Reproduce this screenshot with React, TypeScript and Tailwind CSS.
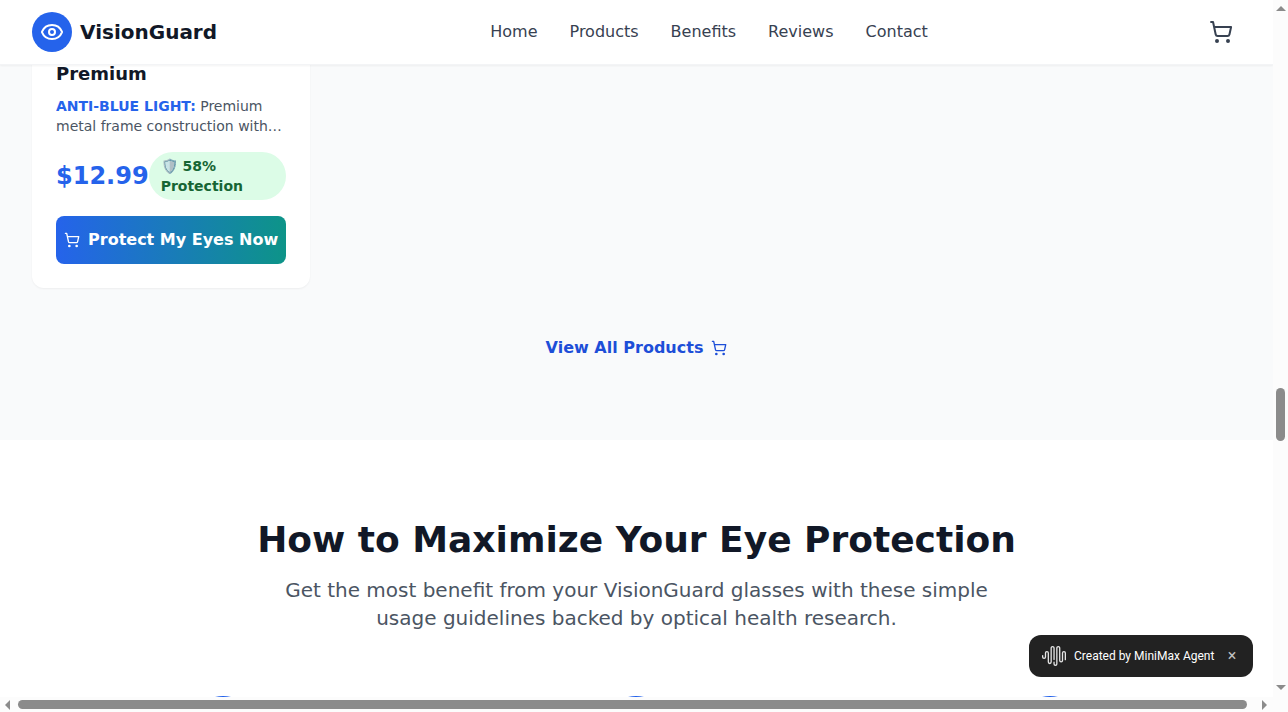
import { Eye, ShoppingCart } from "lucide-react";

const links = ["Home", "Products", "Benefits", "Reviews", "Contact"];
const steps = ["Step 1", "Step 2", "Step 3"];

function Header() {
  return (
    <header className="relative z-10 flex h-16 shrink-0 items-center justify-between bg-white px-8 shadow-[0_1px_0_#f3f4f6,0_2px_2px_rgba(0,0,0,0.05)]">
      <a href="#home" className="flex items-center gap-2">
        <span className="flex size-10 items-center justify-center rounded-full bg-[#2563eb] text-white">
          <Eye size={24} />
        </span>
        <span className="text-xl font-bold text-[#111827]">VisionGuard</span>
      </a>
      <nav className="flex gap-8 text-[#374151]">
        {links.map((link) => (
          <a key={link} href={`#${link.toLowerCase()}`}>
            {link}
          </a>
        ))}
      </nav>
      <button type="button" aria-label="Cart" className="p-2 text-[#374151]">
        <ShoppingCart size={24} />
      </button>
    </header>
  );
}

function ProductCard() {
  return (
    <article className="-mt-1 rounded-b-xl bg-white px-6 pb-6 shadow-[0_1px_2px_rgba(0,0,0,0.05)]">
      <h3 className="mb-2 text-lg font-semibold text-[#111827]">Premium</h3>
      <p className="mb-4 line-clamp-2 text-sm text-[#4b5563]">
        <strong className="font-bold text-[#2563eb]">ANTI-BLUE LIGHT:</strong> Premium metal frame
        construction with advanced lens coating
      </p>
      <div className="mb-4 flex items-center justify-between">
        <span className="text-2xl font-bold text-[#2563eb]">$12.99</span>
        <span className="rounded-full bg-[#dcfce7] px-3 py-1 text-sm font-semibold text-[#166534]">
          🛡️ 58% Protection
        </span>
      </div>
      <button
        type="button"
        className="flex h-12 w-full items-center justify-center gap-2 rounded-lg bg-[linear-gradient(to_right,#2563eb,#0d9488)] font-semibold whitespace-nowrap text-white"
      >
        <ShoppingCart size={16} className="shrink-0" />
        Protect My Eyes Now
      </button>
    </article>
  );
}

function Products() {
  return (
    <section className="bg-[#f9fafb] px-8 pb-20">
      <div className="grid grid-cols-4 gap-8">
        <ProductCard />
      </div>
      <div className="mt-12 flex justify-center">
        <a href="#products" className="flex items-center gap-2 font-semibold text-[#1d4ed8]">
          View All Products
          <ShoppingCart size={16} />
        </a>
      </div>
    </section>
  );
}

function Guidelines() {
  return (
    <section className="bg-white px-8 pt-20">
      <div className="mb-16 text-center">
        <h2 className="mb-4 text-4xl font-bold text-[#111827]">
          How to Maximize Your Eye Protection
        </h2>
        <p className="mx-auto max-w-3xl text-xl text-[#4b5563]">
          Get the most benefit from your VisionGuard glasses with these simple usage guidelines
          backed by optical health research.
        </p>
      </div>
      <div className="grid grid-cols-3 gap-8">
        {steps.map((step) => (
          <div key={step} className="flex justify-center">
            <span className="size-16 rounded-full bg-[#2563eb]" />
          </div>
        ))}
      </div>
    </section>
  );
}

function AgentBadge() {
  return (
    <aside className="absolute right-5 bottom-5 z-20 flex h-[42px] w-56 items-center rounded-xl bg-[#222222] px-[13px] font-['Roboto',sans-serif] text-xs text-white">
      <svg viewBox="0 0 24 24" className="mr-2 size-6 shrink-0" fill="#e5e5e5" aria-hidden="true">
        <path d="M16.278 2c1.156 0 2.093.927 2.093 2.07v12.501a.74.74 0 00.744.709.74.74 0 00.743-.709V9.099a2.06 2.06 0 012.071-2.049A2.06 2.06 0 0124 9.1v6.561a.649.649 0 01-.652.645.649.649 0 01-.653-.645V9.1a.762.762 0 00-.766-.758.762.762 0 00-.766.758v7.472a2.037 2.037 0 01-2.048 2.026 2.037 2.037 0 01-2.048-2.026v-12.5a.785.785 0 00-.788-.753.785.785 0 00-.789.752l-.001 15.904A2.037 2.037 0 0113.441 22a2.037 2.037 0 01-2.048-2.026V18.04c0-.356.292-.645.652-.645.36 0 .652.289.652.645v1.934c0 .263.142.506.372.638.23.131.514.131.744 0a.734.734 0 00.372-.638V4.07c0-1.143.937-2.07 2.093-2.07zm-5.674 0c1.156 0 2.093.927 2.093 2.07v11.523a.648.648 0 01-.652.645.648.648 0 01-.652-.645V4.07a.785.785 0 00-.789-.78.785.785 0 00-.789.78v14.013a2.06 2.06 0 01-2.07 2.048 2.06 2.06 0 01-2.071-2.048V9.1a.762.762 0 00-.766-.758.762.762 0 00-.766.758v3.8a2.06 2.06 0 01-2.071 2.049A2.06 2.06 0 010 12.9v-1.378c0-.357.292-.646.652-.646.36 0 .653.29.653.646V12.9c0 .418.343.757.766.757s.766-.339.766-.757V9.099a2.06 2.06 0 012.07-2.048 2.06 2.06 0 012.071 2.048v8.984c0 .419.343.758.767.758.423 0 .766-.339.766-.758V4.07c0-1.143.937-2.07 2.093-2.07z" />
      </svg>
      <span className="whitespace-nowrap">Created by MiniMax Agent</span>
      <button
        type="button"
        aria-label="Close"
        className="ml-auto flex size-4 items-center justify-center text-base text-[#c0c0c0]"
      >
        ×
      </button>
    </aside>
  );
}

function VerticalScrollbar() {
  return (
    <div className="flex flex-col items-center bg-[#fcfcfc] pt-1.5 pb-[7px]">
      <svg width="10" height="5" viewBox="0 0 10 5" fill="#8b8b8b" aria-hidden="true">
        <path d="M0 5 5 0l5 5z" />
      </svg>
      <div className="flex w-[9px] grow flex-col pt-[17px]">
        <div className="grow-[360]" />
        <div className="h-[53px] rounded-full bg-[#8b8b8b]" />
        <div className="grow-[244]" />
      </div>
      <svg width="10" height="5" viewBox="0 0 10 5" fill="#8b8b8b" aria-hidden="true">
        <path d="M0 0h10L5 5z" />
      </svg>
    </div>
  );
}

function HorizontalScrollbar() {
  return (
    <div className="flex items-center bg-[#fcfcfc] pr-1.5 pl-[5px]">
      <svg width="5" height="10" viewBox="0 0 5 10" fill="#8b8b8b" aria-hidden="true">
        <path d="M5 0v10L0 5z" />
      </svg>
      <div className="mr-[15px] ml-2 h-[9px] grow rounded-full bg-[#8b8b8b]" />
      <svg width="5" height="10" viewBox="0 0 5 10" fill="#8b8b8b" aria-hidden="true">
        <path d="M0 0l5 5-5 5z" />
      </svg>
    </div>
  );
}

export default function App() {
  return (
    <div className="grid h-screen grid-cols-[minmax(0,1fr)_15px] grid-rows-[minmax(0,1fr)_15px] bg-[#fcfcfc] font-['DejaVu_Sans',sans-serif]">
      <div className="relative overflow-hidden bg-white">
        <Header />
        <main>
          <Products />
          <Guidelines />
        </main>
        <AgentBadge />
      </div>
      <VerticalScrollbar />
      <HorizontalScrollbar />
    </div>
  );
}
